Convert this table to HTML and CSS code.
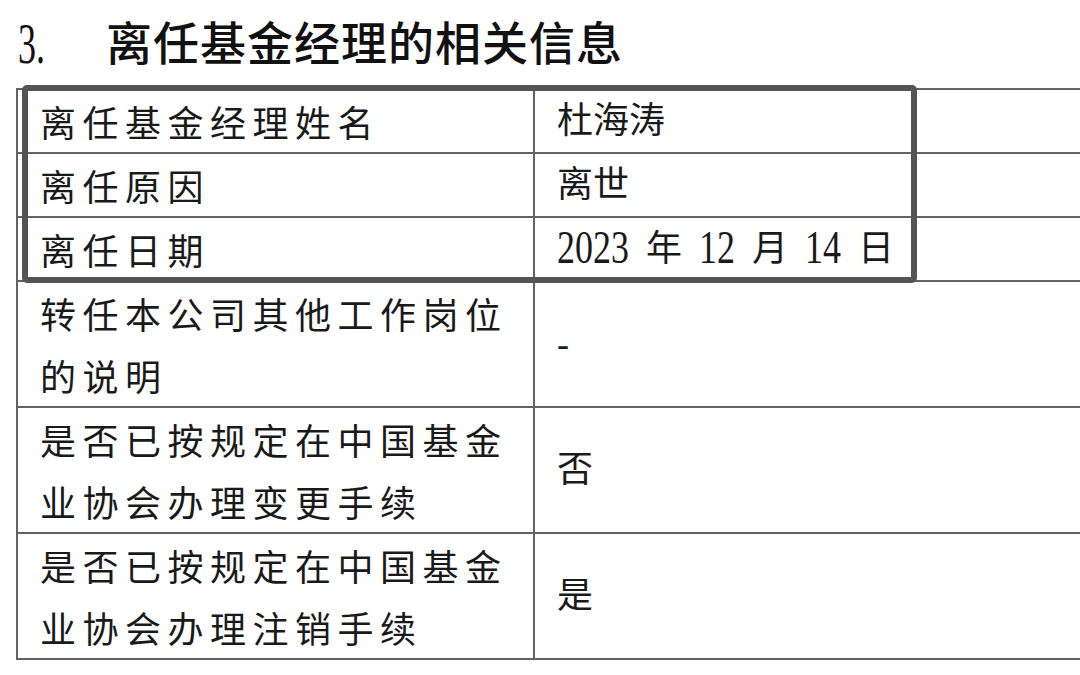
FILE: index.html
```html
<!DOCTYPE html>
<html lang="zh-CN">
<head>
<meta charset="utf-8">
<link rel="stylesheet" href="styles.css">
</head>
<body>
<div class="page">
  <h2 class="title"><span class="num"><span class="num-glyph">3.</span></span><span class="text">离任基金经理的相关信息</span></h2>
  <div class="table-wrap">
    <table class="info">
      <tbody>
        <tr><td class="k">离任基金经理姓名</td><td class="v">杜海涛</td></tr>
        <tr><td class="k">离任原因</td><td class="v">离世</td></tr>
        <tr><td class="k">离任日期</td><td class="v date"><span class="dg">2023</span> 年 <span class="dg">12</span> 月 <span class="dg">14</span> 日</td></tr>
        <tr><td class="k">转任本公司其他工作岗位的说明</td><td class="v">-</td></tr>
        <tr><td class="k">是否已按规定在中国基金业协会办理变更手续</td><td class="v">否</td></tr>
        <tr><td class="k">是否已按规定在中国基金业协会办理注销手续</td><td class="v">是</td></tr>
      </tbody>
    </table>
    <div class="highlight"></div>
  </div>
</div>
</body>
</html>
```
FILE: styles.css
```css
html, body {
  margin: 0;
  padding: 0;
  background: #ffffff;
}
body {
  width: 1080px;
  height: 675px;
  overflow: hidden;
  font-family: "Liberation Serif", "Noto Sans CJK SC", serif;
  color: #1a1a1a;
}
.page {
  padding-top: 12px;
}
.title {
  margin: 0;
  height: 56px;
  line-height: 56px;
  font-size: 46px;
  font-weight: 500;
  display: flex;
  align-items: center;
  padding-left: 18px;
  color: #111;
}
.title .num {
  font-family: "Liberation Serif", serif;
  font-size: 36px;
  line-height: 36px;
  font-weight: 400;
  width: 88px;
}
.title .num-glyph {
  display: inline-block;
  line-height: 36px;
  transform-origin: 50% 12px;
  transform: scaleY(1.6);
}
.title .text {
  font-family: "Noto Sans CJK SC", sans-serif;
  letter-spacing: 1px;
}
.table-wrap {
  position: relative;
  margin-top: 20px;
}
.info {
  border-collapse: collapse;
  margin-left: 16px;
  width: 1120px;
  table-layout: fixed;
}
.info td {
  border: 2px solid #636363;
  padding: 0 0 0 22px;
  font-size: 36px;
  line-height: 62px;
  vertical-align: middle;
  color: #1a1a1a;
}
.info td.k {
  width: 493px;
  font-family: "Noto Sans CJK SC", sans-serif;
  letter-spacing: 6.5px;
  padding-right: 0;
  word-break: break-all;
}
.info td.v {
  font-family: "Liberation Serif", "Noto Sans CJK SC", serif;
}
.info td.date {
  word-spacing: 8px;
}
.dg {
  display: inline-block;
  line-height: 36px;
  word-spacing: 0;
  transform-origin: 50% 1px;
  transform: translateY(-6px) scaleY(1.27);
}
.highlight {
  position: absolute;
  left: 22px;
  top: -3px;
  width: 883px;
  height: 186px;
  border: 6px solid #545454;
  border-radius: 5px;
  pointer-events: none;
}
```
